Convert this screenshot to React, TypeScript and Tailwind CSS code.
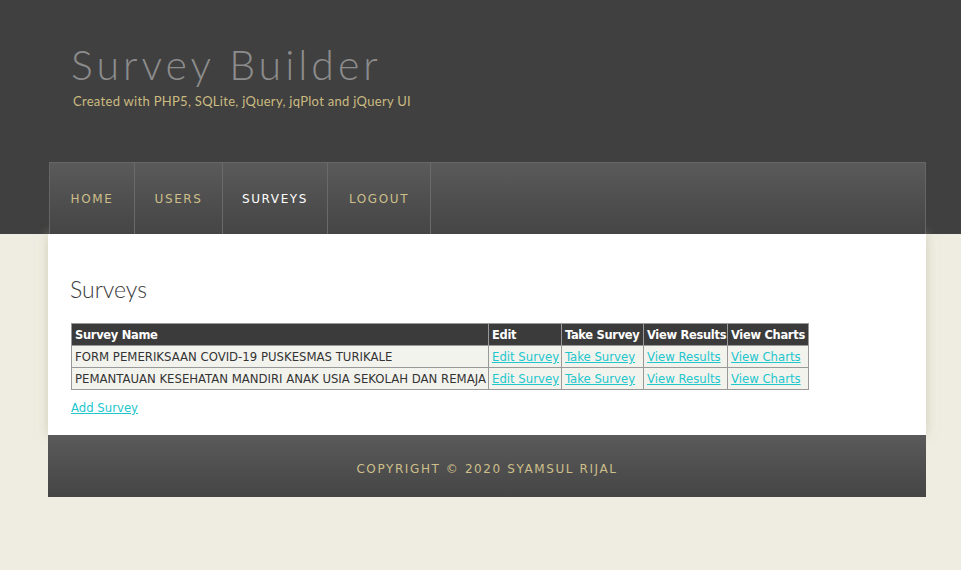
import React from "react";

const rows = [
  "FORM PEMERIKSAAN COVID-19 PUSKESMAS TURIKALE",
  "PEMANTAUAN KESEHATAN MANDIRI ANAK USIA SEKOLAH DAN REMAJA",
];

const navItems = [
  { label: "HOME", w: "w-[85px]", active: false },
  { label: "USERS", w: "w-[88px]", active: false },
  { label: "SURVEYS", w: "w-[105px]", active: true },
  { label: "LOGOUT", w: "w-[103px]", active: false },
];

export default function App() {
  return (
    <div className="min-h-[570px] w-full bg-[#efede1] font-['DejaVu_Sans_Condensed','DejaVu_Sans',sans-serif] font-stretch-semi-condensed">
      <div className="bg-[#404040] h-[234px] flex flex-col">
        <div className="pl-[71px] pt-[40px] h-[162px]">
          <div className="font-['Lato',sans-serif] font-light text-[41px] leading-[50px] tracking-[4px] text-[#8c8c8c]">
            Survey Builder
          </div>
          <div className="font-['Lato',sans-serif] text-[13px] leading-[16px] mt-[3px] ml-[2px] tracking-[0.3px] text-[#cbbb80]">
            Created with PHP5, SQLite, jQuery, jqPlot and jQuery UI
          </div>
        </div>
        <div className="ml-[49px] w-[877px] h-[72px] border border-b-0 border-[#666] bg-gradient-to-b from-[#5a5a5a] to-[#454545] flex font-['DejaVu_Sans',sans-serif] font-stretch-normal">
          {navItems.map((n) => (
            <div
              key={n.label}
              className={`${n.w} h-full border-r border-[#6a6a6a] flex items-center justify-center text-[12px] tracking-[1.6px] ${n.active ? "text-white" : "text-[#cdbf8a]"}`}
            >
              {n.label}
            </div>
          ))}
        </div>
      </div>
      <div className="ml-[48px] w-[878px] bg-white shadow-[0_0_10px_rgba(190,185,160,0.6)] pl-[23px] pt-[44px] pb-[19px] h-[201px]">
        <h1 className="font-['Lato',sans-serif] font-light text-[23px] leading-[26px] text-[#3a3a3a] mb-[21px] ml-[-1px] mt-[-2px]">
          Surveys
        </h1>
        <table className="table-fixed w-[737px] border-collapse border border-[#999] text-[13px] leading-[21px]">
          <colgroup>
            <col className="w-[417px]" />
            <col className="w-[73px]" />
            <col className="w-[82px]" />
            <col className="w-[84px]" />
            <col className="w-[81px]" />
          </colgroup>
          <thead>
            <tr className="bg-[#3b3b3b] text-white text-[12.75px] tracking-[-0.3px]">
              <th className="border border-[#999] text-left px-[3px] font-bold whitespace-nowrap">Survey Name</th>
              <th className="border border-[#999] text-left px-[3px] font-bold whitespace-nowrap">Edit</th>
              <th className="border border-[#999] text-left px-[3px] font-bold whitespace-nowrap">Take Survey</th>
              <th className="border border-[#999] text-left px-[3px] font-bold whitespace-nowrap">View Results</th>
              <th className="border border-[#999] text-left px-[3px] font-bold whitespace-nowrap">View Charts</th>
            </tr>
          </thead>
          <tbody>
            {rows.map((r) => (
              <tr key={r} className="bg-[#f3f3ee] text-[#333]">
                <td className="border border-[#999] px-[3px] whitespace-nowrap overflow-hidden">{r}</td>
                <td className="border border-[#999] px-[3px] whitespace-nowrap"><a href="#" className="underline text-[#22c6cd]">Edit Survey</a></td>
                <td className="border border-[#999] px-[3px] whitespace-nowrap"><a href="#" className="underline text-[#22c6cd]">Take Survey</a></td>
                <td className="border border-[#999] px-[3px] whitespace-nowrap"><a href="#" className="underline text-[#22c6cd]">View Results</a></td>
                <td className="border border-[#999] px-[3px] whitespace-nowrap"><a href="#" className="underline text-[#22c6cd]">View Charts</a></td>
              </tr>
            ))}
          </tbody>
        </table>
        <a href="#" className="inline-block mt-[8px] text-[13px] underline text-[#22c6cd]">Add Survey</a>
      </div>
      <div className="ml-[48px] w-[878px] h-[62px] pt-[5px] bg-gradient-to-b from-[#5a5a5a] to-[#454545] flex items-center justify-center text-[12px] tracking-[1.6px] text-[#cdbf8a] font-['DejaVu_Sans',sans-serif] font-stretch-normal">
        COPYRIGHT © 2020 SYAMSUL RIJAL
      </div>
    </div>
  );
}
